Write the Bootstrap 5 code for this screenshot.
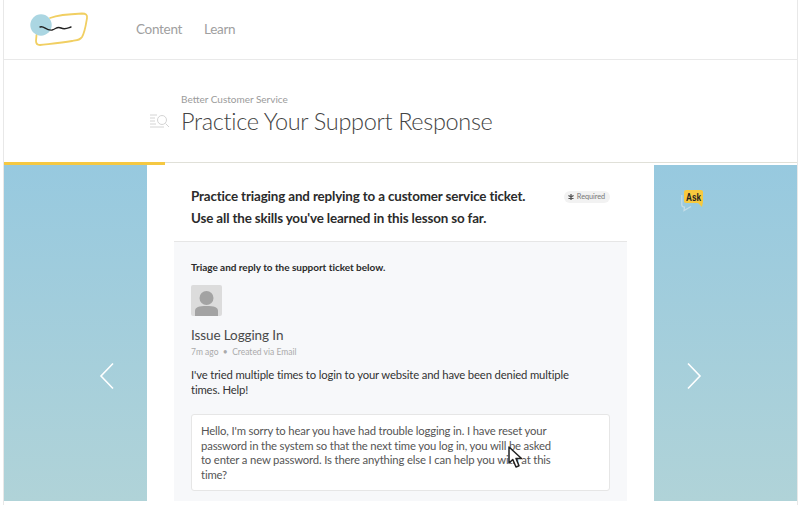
<!DOCTYPE html>
<html lang="en"><head><meta charset="utf-8"><title>Practice</title>
<link rel="stylesheet" href="https://cdn.jsdelivr.net/npm/bootstrap@5.3.0/dist/css/bootstrap.min.css">
<style>
html,body{height:505px;overflow:hidden}
body{font-family:"Lato","Liberation Sans",sans-serif;color:#4a4a4a;background:#fff}
.frame{height:505px;margin:0 2px 0 3px;border-left:1px solid #e8e8e8;border-right:1px solid #e8e8e8;display:flex;flex-direction:column}
.topbar{height:60px;border-bottom:1px solid #e9e9e9;padding-left:26px;flex:none}
.toplink{font-size:13.5px;color:#a0a0a0;letter-spacing:-.3px}
.navgap{gap:22px}
.logo-wrap{width:62px;margin-right:44px;align-self:flex-start;margin-top:10px}
.titlezone{height:102px;flex:none;padding:33px 0 0 145px}
.crumb{font-size:10px;color:#9b9b9b;line-height:13px;margin-left:32px}
.ptitle{font-size:23.5px;font-weight:300;line-height:30px;color:#444;margin:0;letter-spacing:-.33px}
.prog{height:3px;flex:none;background:linear-gradient(#e0e0d8 1.5px,#fff 1.5px)}
.prog-fill{width:161px;height:2.500px;background:#f5c842}
.stage{flex:1;min-height:0;padding-bottom:4px;display:flex}
.sidepane{width:143px;flex:none;background:linear-gradient(#97c9df,#b0d3d8);color:#fff}
.sideleft{padding:197px 0 0 95px}
.sideright{padding:25px 0 0 27px;display:flex;flex-direction:column}
.nextarrow{margin:150px 0 0 5px}
.mainpane{flex:1;min-width:0;position:relative}
.intro{height:77px;margin:0 27px;border-bottom:1px solid #e6e6e6;padding:21px 17px 0;font-weight:700;font-size:13.4px;line-height:21.5px;color:#2b2b2b;letter-spacing:-.15px}
.reqpill{font-size:7.3px;font-weight:400;color:#777;background:#f2f2f2;border-radius:8px;padding:0 5px 0 4px;line-height:12px;height:12px;margin-top:5px;letter-spacing:-.05px;gap:3px}
.ticket{background:#f7f8fa;margin:0 27px;height:259px;padding:18px 17px 0}
.tasklabel{font-size:10px;font-weight:700;color:#2b2b2b;line-height:14px;letter-spacing:-.03px}
.avatar{width:31px;height:31px;background:#dcdcdc;border-radius:2px;margin-top:11px;display:block}
.issue{font-size:13.5px;line-height:18px;color:#4a4a4a;margin-top:10px;letter-spacing:-.1px}
.meta{font-size:8.5px;line-height:12px;color:#aaa;margin-top:2px}
.msg{font-size:11.3px;line-height:15.2px;color:#333;margin-top:9px;width:400px;letter-spacing:-.15px}
.replybox{background:#fff;border:1px solid #e6e6e6;border-radius:3px;height:77px;margin-top:17px;padding:9px 9px;font-size:11.3px;line-height:14.5px;color:#555;width:419px;letter-spacing:-.16px}
.replybox span{display:block;white-space:nowrap}
.cursorsvg{position:absolute;left:361px;top:281px}
</style></head><body>
<div class="frame">
 <div class="topbar d-flex align-items-center">
  <div class="logo-wrap">
   <svg width="62" height="36" viewBox="30 10 62 36" class="d-block"><path d="M50 18C58 15 70 14 82 13.500C86 13.500 87.500 15 87 18C86 24 85 32 82 37C80 40 78 40 72 41C60 43 48 44 40 45C37 45 36 44 36 41L36.500 35" fill="none" stroke="#f1cf62" stroke-width="1.800" stroke-linecap="round"/><circle cx="41" cy="25" r="10.700" fill="#abd6e2"/><path d="M40 27C44 25 46 31 52 30C56 29 57 26 61 28C65 30 68 28 71 27" fill="none" stroke="#222" stroke-width="1.400" stroke-linecap="round"/></svg>
  </div>
  <nav class="d-flex navgap"><span class="toplink">Content</span><span class="toplink">Learn</span></nav>
 </div>
 <div class="titlezone">
  <div class="crumb">Better Customer Service</div>
  <div class="d-flex align-items-center gap-2">
   <svg width="24" height="16" viewBox="0 0 24 16"><g stroke="#d4d4d4" fill="none" stroke-width="1"><path d="M1 2h7M1 5h5M1 8h5M1 11h6M1 14h14"/><circle cx="13" cy="7" r="4.500"/><path d="M16.500 10.500L20 14"/></g></svg>
   <h1 class="ptitle">Practice Your Support Response</h1>
  </div>
 </div>
 <div class="prog"><div class="prog-fill"></div></div>
 <div class="stage">
  <div class="sidepane sideleft"><svg width="16" height="28" viewBox="0 0 16 28" class="d-block"><path d="M14 1.500L2 14L14 26.500" fill="none" stroke="#fff" stroke-width="1.600"/></svg></div>
  <div class="mainpane">
   <div class="intro">
    <div class="d-flex justify-content-between"><span>Practice triaging and replying to a customer service ticket.</span><span class="reqpill d-flex align-items-center"><svg width="6" height="6" viewBox="0 0 7 7"><path d="M3.500 0V7M.5 1.700L6.500 5.300M6.500 1.700L.5 5.300" stroke="#555" stroke-width="1.500"/></svg>Required</span></div>
    <div>Use all the skills you've learned in this lesson so far.</div>
   </div>
   <div class="ticket">
    <div class="tasklabel">Triage and reply to the support ticket below.</div>
    <svg class="avatar" viewBox="0 0 31 31"><circle cx="15.500" cy="13" r="7" fill="#a3a3a3"/><path d="M4 31V26C4 22 8 21 15.500 21S27 22 27 26V31Z" fill="#a3a3a3"/></svg>
    <div class="issue">Issue Logging In</div>
    <div class="meta">7m ago &nbsp;•&nbsp; Created via Email</div>
    <div class="msg">I've tried multiple times to login to your website and have been denied multiple times. Help!</div>
    <div class="replybox"><span>Hello, I'm sorry to hear you have had trouble logging in. I have reset your</span><span>password in the system so that the next time you log in, you will be asked</span><span>to enter a new password. Is there anything else I can help you with at this</span><span>time?</span></div>
   </div>
   <svg class="cursorsvg" width="16" height="23" viewBox="0 0 16 23"><path d="M1 1V17L4.800 13.500L8 21L11 19.700L8 12.500L13.500 12.500Z" fill="#fff" stroke="#222" stroke-width="1.500" stroke-linejoin="round"/></svg>
  </div>
  <div class="sidepane sideright">
   <svg width="24" height="22" viewBox="0 0 24 22" class="d-block"><path d="M.8 5V15C.8 16.500 2 17 3.500 17L3 20.500L10 16.500" fill="none" stroke="#c5dde8" stroke-width="1.200"/><path d="M5 0H20C21.200 0 22 .8 22 2V12L21 17L17 13H5C3.800 13 3 12.200 3 11V2C3 .8 3.800 0 5 0Z" fill="#f7c93e"/><text x="0" y="0" transform="translate(12.500 10.500) scale(.78 1)" text-anchor="middle" font-family="Liberation Sans, sans-serif" font-size="10.500" font-weight="700" fill="#222">Ask</text></svg>
   <svg class="nextarrow d-block" width="16" height="28" viewBox="0 0 16 28"><path d="M2 1.500L14 14L2 26.500" fill="none" stroke="#fff" stroke-width="1.600"/></svg>
  </div>
 </div>
</div>
</body></html>
